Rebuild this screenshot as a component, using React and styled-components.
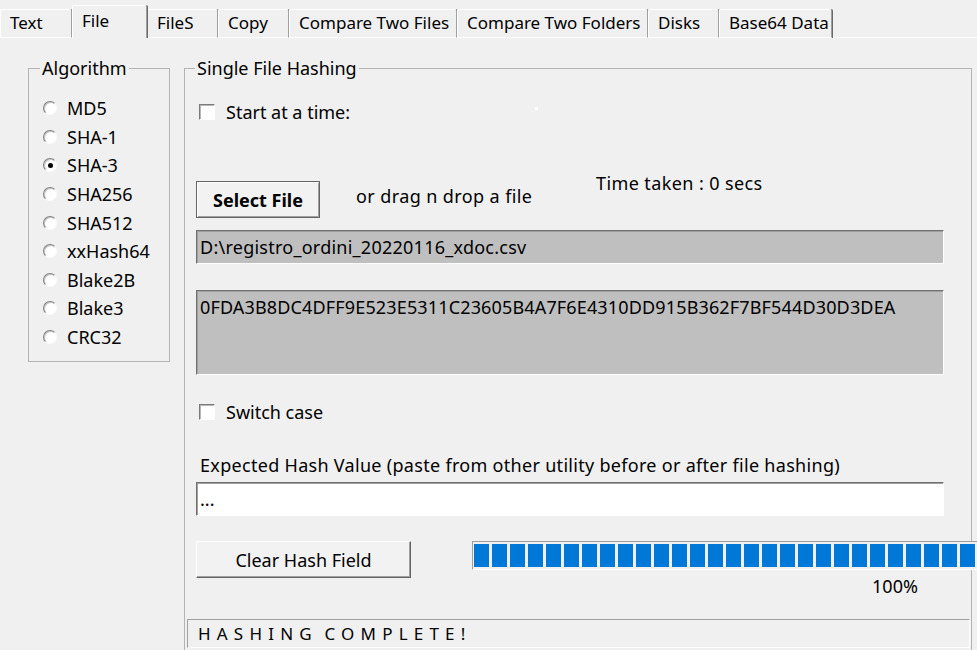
import styled, { createGlobalStyle } from "styled-components";

const GlobalStyle = createGlobalStyle`
  html, body {
    margin: 0;
    padding: 0;
    overflow: hidden;
    background: #f0f0f0;
  }
  body {
    font-family: "Noto Sans", "Open Sans", sans-serif;
    color: #000;
  }
  * {
    box-sizing: border-box;
  }
`

const Window = styled.div`
  width: 977px;
  height: 650px;
  overflow: hidden;
  background: #f0f0f0;
  font-size: 18px;
`

const TabStrip = styled.div`
  display: flex;
  align-items: flex-end;
  height: 38px;
  box-shadow: inset 0 -1px 0 #fff;
`

const Tab = styled.div`
  position: relative;
  z-index: ${props => props.$active ? 2 : 1};
  width: ${props => props.$w}px;
  height: ${props => props.$active ? 33 : 29}px;
  padding: ${props => props.$active ? "4px 0 0 9px" : "2px 0 0 9px"};
  font-size: 17px;
  line-height: 22px;
  white-space: nowrap;
  background: #f0f0f0;
  border-top: 1px solid #fff;
  border-left: 1px solid #fff;
  border-right: 1px solid #a0a0a0;
  border-bottom: ${props => props.$active ? "none" : "1px solid #fff"};
  border-radius: 2px 2px 0 0;
  box-shadow: 1px 0 0 #696969;
`

const Panel = styled.div`
  display: flex;
  align-items: flex-start;
  padding-left: 28px;
`

const Group = styled.fieldset`
  flex: none;
  margin: 18px 0 0 ${props => props.$ml || 0}px;
  padding: 0;
  min-width: 0;
  width: ${props => props.$w}px;
  height: ${props => props.$h}px;
  border: 1px solid #b4b4b4;
`

const Legend = styled.legend`
  margin-left: ${props => props.$ml}px;
  padding: 0 2px;
  font-size: 18px;
  line-height: 24px;
`

const RadioList = styled.div`
  padding: 14px 0 0 14px;
`

const RadioRow = styled.div`
  display: flex;
  align-items: center;
  gap: 10px;
  height: 28.6px;
  line-height: 24px;
`

const RadioDot = styled.span`
  position: relative;
  width: 14px;
  height: 14px;
  flex: none;
  border-radius: 50%;
  background: #fff;
  border: 1px solid;
  border-color: #808080 #fafafa #fafafa #808080;
  box-shadow: inset 1px 1px 0 #c4c4c4;

  &::after {
    content: "";
    display: ${props => props.$checked ? "block" : "none"};
    position: absolute;
    left: 3.5px;
    top: 3.5px;
    width: 5px;
    height: 5px;
    border-radius: 50%;
    background: #000;
  }
`

const Content = styled.div`
  display: flex;
  flex-direction: column;
  padding: 0 27px 0 11px;
`

const CheckRow = styled.label`
  display: flex;
  align-items: center;
  gap: 11px;
  height: 24px;
  margin-top: ${props => props.$mt}px;
  padding-left: 3px;
  line-height: 24px;
`

const CheckBox = styled.span`
  width: 16px;
  height: 16px;
  flex: none;
  background: #fff;
  border: 1px solid;
  border-color: #7a7a7a #fff #fff #7a7a7a;
  box-shadow: inset 1px 1px 0 #b8b8b8;
`

const Speck = styled.span`
  width: 3px;
  height: 3px;
  margin: 0 0 8px 174px;
  background: #fff;
`

const SelectRow = styled.div`
  display: grid;
  grid-template-columns: 124px 276px auto;
  align-items: start;
  height: 47px;
  margin-top: 47px;
  line-height: 24px;
`

const Button = styled.button`
  flex: none;
  width: ${props => props.$w}px;
  height: 37px;
  margin-top: ${props => props.$mt || 0}px;
  padding: 0;
  font-family: inherit;
  font-size: 18px;
  font-weight: ${props => props.$bold ? 700 : 400};
  white-space: nowrap;
  color: #000;
  background: #f2f2f2;
  border: 1px solid;
  border-color: ${props => props.$default ? "#646464" : "#fff #646464 #646464 #fff"};
  box-shadow: ${props => props.$default
    ? "inset 1px 1px 0 #fff, inset -1px -1px 0 #a0a0a0"
    : "inset -1px -1px 0 #a0a0a0"};
`

const Hint = styled.span`
  margin-top: ${props => props.$mt}px;
  padding-left: ${props => props.$pl || 0}px;
  letter-spacing: 0.4px;
  white-space: nowrap;
`

const Field = styled.div`
  display: flex;
  align-items: ${props => props.$top ? "flex-start" : "center"};
  height: ${props => props.$h}px;
  margin-top: ${props => props.$mt}px;
  padding: ${props => props.$top ? "4px 3px 0" : "0 3px"};
  font-size: 18px;
  line-height: 24px;
  letter-spacing: ${props => props.$ls || 0}px;
  white-space: nowrap;
  background: ${props => props.$white ? "#fff" : "#bfbfbf"};
  border: 1px solid;
  border-color: #707070 #fff #fff #707070;
  box-shadow: inset 1px 1px 0 #a0a0a0;
`

const FieldLabel = styled.div`
  margin-top: 29px;
  padding-left: 4px;
  line-height: 24px;
  letter-spacing: 0.3px;
  white-space: nowrap;
`

const BottomRow = styled.div`
  display: flex;
  align-items: flex-start;
  gap: 61px;
  margin-top: 25px;
`

const ProgressCol = styled.div`
  flex: none;
  width: 846px;
`

const ProgressBar = styled.div`
  height: 29px;
  padding: 2px 1px;
  background: #f0f0f0;
  border: 1px solid;
  border-color: #a0a0a0 #fff #fff #a0a0a0;
`

const ProgressFill = styled.div`
  height: 100%;
  background: repeating-linear-gradient(
    to right,
    #0078d7 0,
    #0078d7 15px,
    #f0f0f0 15px,
    #f0f0f0 18px
  );
`

const Percent = styled.div`
  margin-top: 4px;
  text-align: center;
  line-height: 24px;
`

const StatusBar = styled.div`
  height: 29px;
  margin: 21px -26px 0 -9px;
  padding-left: 10px;
  font-size: 17px;
  line-height: 27px;
  letter-spacing: 6.2px;
  word-spacing: -4px;
  white-space: nowrap;
  border: 1px solid;
  border-color: #a0a0a0 #fff #fff #a0a0a0;
`

const tabs = [
  { label: "Text", w: 72 },
  { label: "File", w: 75, active: true },
  { label: "FileS", w: 71 },
  { label: "Copy", w: 71 },
  { label: "Compare Two Files", w: 168 },
  { label: "Compare Two Folders", w: 191 },
  { label: "Disks", w: 71 },
  { label: "Base64 Data", w: 113 },
]

const algorithms = ["MD5", "SHA-1", "SHA-3", "SHA256", "SHA512", "xxHash64", "Blake2B", "Blake3", "CRC32"]

const App = () => {
  return (
    <Window>
      <GlobalStyle />
      <TabStrip>
        {tabs.map(tab => (
          <Tab key={tab.label} $w={tab.w} $active={tab.active}>{tab.label}</Tab>
        ))}
      </TabStrip>
      <Panel>
        <Group $w={142} $h={306}>
          <Legend $ml={11}>Algorithm</Legend>
          <RadioList>
            {algorithms.map(name => (
              <RadioRow key={name}>
                <RadioDot $checked={name === "SHA-3"} />
                {name}
              </RadioRow>
            ))}
          </RadioList>
        </Group>
        <Group $ml={14} $w={788} $h={640}>
          <Legend $ml={10}>Single File Hashing</Legend>
          <Content>
            <CheckRow $mt={20}>
              <CheckBox />
              Start at a time:
              <Speck />
            </CheckRow>
            <SelectRow>
              <Button $w={124} $mt={10} $bold $default>Select File</Button>
              <Hint $mt={13} $pl={36}>or drag n drop a file</Hint>
              <Hint $mt={0}>Time taken : 0 secs</Hint>
            </SelectRow>
            <Field $h={34} $mt={12} $ls={0.25}>D:\registro_ordini_20220116_xdoc.csv</Field>
            <Field $h={85} $mt={26} $ls={0.15} $top>0FDA3B8DC4DFF9E523E5311C23605B4A7F6E4310DD915B362F7BF544D30D3DEA</Field>
            <CheckRow $mt={25}>
              <CheckBox />
              Switch case
            </CheckRow>
            <FieldLabel>Expected Hash Value (paste from other utility before or after file hashing)</FieldLabel>
            <Field $h={34} $mt={5} $white>...</Field>
            <BottomRow>
              <Button $w={215}>Clear Hash Field</Button>
              <ProgressCol>
                <ProgressBar>
                  <ProgressFill />
                </ProgressBar>
                <Percent>100%</Percent>
              </ProgressCol>
            </BottomRow>
            <StatusBar>HASHING COMPLETE!</StatusBar>
          </Content>
        </Group>
      </Panel>
    </Window>
  );
}

export default App;
